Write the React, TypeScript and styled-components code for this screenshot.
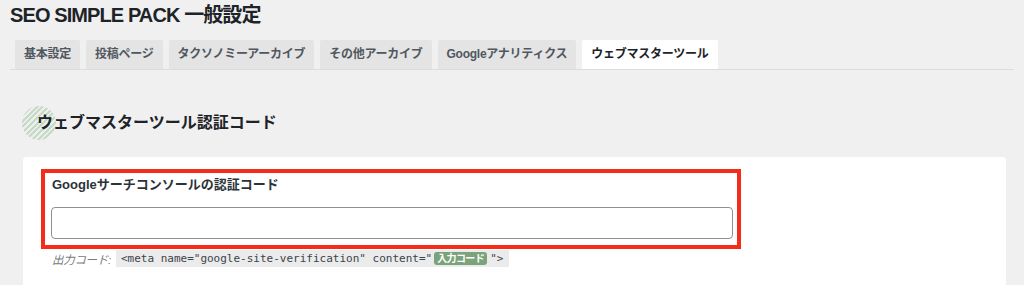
import React from "react";
import styled, { createGlobalStyle } from "styled-components";

const GlobalStyle = createGlobalStyle`
  html, body {
    margin: 0;
    padding: 0;
    background: #f0f0f1;
    font-family: "Liberation Sans", "Noto Sans CJK JP", sans-serif;
    color: #1d2327;
  }
  * { box-sizing: border-box; }
`;

const Page = styled.div`
  padding: 0 10px;
  height: 285px;
  overflow: hidden;
`;

const Title = styled.h1`
  margin: 0;
  font-size: 20px;
  line-height: 30px;
  font-weight: 700;
  color: #1d2327;
  letter-spacing: -0.9px;
`;

const TabBar = styled.nav`
  display: flex;
  gap: 6px;
  margin-top: 10px;
  padding-left: 5px;
  border-bottom: 1px solid #dcdcde;
`;

const Tab = styled.div<{ $active?: boolean }>`
  height: 29px;
  line-height: 29px;
  padding: 0 9px;
  font-size: 12px;
  font-weight: 700;
  letter-spacing: -0.25px;
  white-space: nowrap;
  border-radius: 2px 2px 0 0;
  background: ${(p) => (p.$active ? "#ffffff" : "#e4e4e4")};
  color: ${(p) => (p.$active ? "#1d2327" : "#50575e")};
`;

const SectionHeading = styled.h2`
  position: relative;
  margin: 36px 0 0 12px;
  height: 34px;
  line-height: 34px;
  padding-left: 15px;
  font-size: 16px;
  font-weight: 700;
  color: #1d2327;
  &::before {
    content: "";
    position: absolute;
    left: 0;
    top: 0;
    width: 34px;
    height: 34px;
    border-radius: 50%;
    background: repeating-linear-gradient(
      -45deg,
      #c9d9c9 0px,
      #c9d9c9 2px,
      #eaf0ea 2px,
      #eaf0ea 4px
    );
    z-index: 0;
  }
  span {
    position: relative;
    z-index: 1;
  }
`;

const Card = styled.section`
  margin: 17px 8px 0 13px;
  background: #ffffff;
  border-radius: 4px;
  padding: 12px 18px 30px;
  min-height: 140px;
`;

const HighlightBox = styled.div`
  width: 700px;
  border: 4px solid #f42d1b;
  padding: 2px 4px 6px 6px;
`;

const FieldLabel = styled.label`
  display: block;
  font-size: 13px;
  line-height: 20px;
  font-weight: 700;
  color: #2c3338;
  padding-left: 1px;
`;

const TextInput = styled.input`
  display: block;
  margin-top: 12px;
  width: 682px;
  height: 32px;
  border: 1px solid #8c8f94;
  border-radius: 4px;
  background: #fff;
  font-size: 14px;
  padding: 0 8px;
`;

const OutputLine = styled.div`
  display: flex;
  align-items: center;
  margin-top: 1px;
  padding-left: 11px;
  height: 17px;
`;

const OutputLabel = styled.span`
  font-size: 11.5px;
  font-style: italic;
  color: #787c82;
  margin-right: 5px;
  letter-spacing: -0.3px;
`;

const CodeSample = styled.code`
  display: inline-flex;
  align-items: center;
  height: 17px;
  padding: 0 6px 0 5px;
  background: #ebebeb;
  font-family: "DejaVu Sans Mono", "Liberation Mono", monospace;
  font-size: 11px;
  color: #3c434a;
  white-space: pre;
`;

const Badge = styled.span`
  display: inline-block;
  margin: 0 3px 0 2px;
  padding: 0 3px;
  height: 13px;
  line-height: 13px;
  border-radius: 3px;
  background: #7ba37b;
  color: #ffffff;
  font-family: "Liberation Sans", "Noto Sans CJK JP", sans-serif;
  font-size: 10px;
  font-weight: 700;
  letter-spacing: -0.6px;
`;

const tabs = [
  "基本設定",
  "投稿ページ",
  "タクソノミーアーカイブ",
  "その他アーカイブ",
  "Googleアナリティクス",
  "ウェブマスターツール",
];

export default function App() {
  return (
    <>
      <GlobalStyle />
      <Page>
        <Title>SEO SIMPLE PACK 一般設定</Title>
        <TabBar>
          {tabs.map((t, i) => (
            <Tab key={t} $active={i === tabs.length - 1}>
              {t}
            </Tab>
          ))}
        </TabBar>
        <SectionHeading>
          <span>ウェブマスターツール認証コード</span>
        </SectionHeading>
        <Card>
          <HighlightBox>
            <FieldLabel htmlFor="gsc">Googleサーチコンソールの認証コード</FieldLabel>
            <TextInput id="gsc" type="text" />
          </HighlightBox>
          <OutputLine>
            <OutputLabel>出力コード:</OutputLabel>
            <CodeSample>
              {'<meta name="google-site-verification" content="'}
              <Badge>入力コード</Badge>
              {'">'}
            </CodeSample>
          </OutputLine>
        </Card>
      </Page>
    </>
  );
}
